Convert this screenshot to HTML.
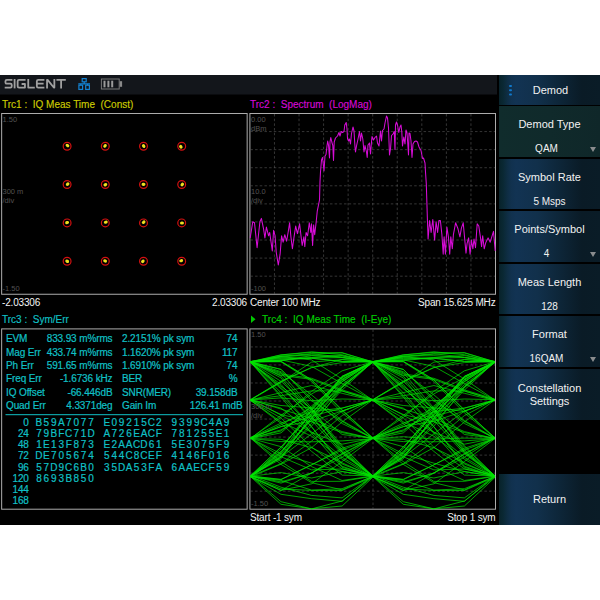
<!DOCTYPE html>
<html><head><meta charset="utf-8"><title>Demod</title>
<style>
html,body{margin:0;padding:0;background:#fff;}
body{width:600px;height:600px;position:relative;overflow:hidden;font-family:"Liberation Sans",sans-serif;}
#scr{position:absolute;left:0;top:75px;width:600px;height:450px;background:#000;}
#hdr{position:absolute;left:0;top:75px;width:497px;height:19px;background:#13161b;box-shadow:0 1px 0 rgba(19,22,27,0.5);}
.t{position:absolute;font-size:10px;line-height:12px;white-space:nowrap;}
.c{color:#10c0c6;-webkit-text-stroke:0.2px #10c0c6;letter-spacing:-0.12px;}
.h{width:7.45px;text-align:center;letter-spacing:0;}
.w{color:#f4f4f4;letter-spacing:-0.17px;}
.d{color:#525252;font-size:7.5px;line-height:9px;}
.pn{position:absolute;border:1px solid #b4b4b4;box-sizing:border-box;}
.mb{position:absolute;left:499px;width:101px;background:linear-gradient(90deg,#08222a 0%,#0a2833 4%,#0e2d42 8%,#11314e 12%,#123353 17%,#11304b 38%,#0d2537 62%,#0a1b26 82%,#0a1c27 100%);color:#f0f0f0;text-align:center;}
.mb.sel{background:linear-gradient(90deg,#102c2c 0%,#102a2b 50%,#0f2729 100%);}
.ml{position:absolute;left:0;width:101px;font-size:11px;line-height:13px;text-align:center;color:#f2f2f2;}
.mv{position:absolute;left:0;width:101px;font-size:10px;line-height:11px;text-align:center;color:#f2f2f2;}
.ar{position:absolute;right:4px;width:0;height:0;border-left:3.5px solid transparent;border-right:3.5px solid transparent;border-top:5.5px solid #8a8c8e;}
svg{position:absolute;left:0;top:0;}
</style></head><body>
<div id="scr"></div>
<div id="hdr"></div>

<!-- panels -->
<svg width="600" height="600" viewBox="0 0 600 600">
<g fill="none" stroke="#acacac" stroke-width="1">
<rect x="1.65" y="113.5" width="245.5" height="180.75"/>
<rect x="249.9" y="113.5" width="245.6" height="180.75"/>
<rect x="1.65" y="328.9" width="245.5" height="180.3"/>
<rect x="249.9" y="328.9" width="245.6" height="180.3"/>
</g>
<g stroke="#5c5c5c" stroke-width="0.58" stroke-dasharray="2.5 2.18">
<line x1="274.46" y1="114" x2="274.46" y2="294" />
<line x1="250.4" y1="131.57" x2="495" y2="131.57" />
<line x1="299.02" y1="114" x2="299.02" y2="294" />
<line x1="250.4" y1="149.65" x2="495" y2="149.65" />
<line x1="323.58" y1="114" x2="323.58" y2="294" />
<line x1="250.4" y1="167.72" x2="495" y2="167.72" />
<line x1="348.14" y1="114" x2="348.14" y2="294" />
<line x1="250.4" y1="185.80" x2="495" y2="185.80" />
<line x1="372.70" y1="114" x2="372.70" y2="294" />
<line x1="250.4" y1="203.88" x2="495" y2="203.88" />
<line x1="397.26" y1="114" x2="397.26" y2="294" />
<line x1="250.4" y1="221.95" x2="495" y2="221.95" />
<line x1="421.82" y1="114" x2="421.82" y2="294" />
<line x1="250.4" y1="240.03" x2="495" y2="240.03" />
<line x1="446.38" y1="114" x2="446.38" y2="294" />
<line x1="250.4" y1="258.10" x2="495" y2="258.10" />
<line x1="470.94" y1="114" x2="470.94" y2="294" />
<line x1="250.4" y1="276.18" x2="495" y2="276.18" />
<line x1="250.4" y1="346.93" x2="495" y2="346.93" />
<line x1="250.4" y1="364.96" x2="495" y2="364.96" />
<line x1="250.4" y1="382.99" x2="495" y2="382.99" />
<line x1="250.4" y1="401.02" x2="495" y2="401.02" />
<line x1="250.4" y1="419.05" x2="495" y2="419.05" />
<line x1="250.4" y1="437.08" x2="495" y2="437.08" />
<line x1="250.4" y1="455.11" x2="495" y2="455.11" />
<line x1="250.4" y1="473.14" x2="495" y2="473.14" />
<line x1="250.4" y1="491.17" x2="495" y2="491.17" />
<line x1="373" y1="329.4" x2="373" y2="508.7" />
</g>
<path d="M250.2 237.9 L252.8 221.7 L254.5 222.8 L257.1 247.7 L259.9 221.7 L261.4 218.4 L263.6 229.2 L264.9 237.9 L266.4 227.1 L268.6 235.8 L269.7 232.5 L272.3 250.9 L273.6 230.3 L275.1 235.8 L276.2 252.0 L278.3 265.0 L280.1 254.2 L281.6 235.8 L283.1 242.2 L284.8 234.7 L286.6 241.2 L288.1 232.5 L289.6 222.8 L290.9 236.8 L292.4 248.8 L293.9 237.9 L295.7 226.0 L297.4 233.6 L299.6 223.8 L301.1 236.8 L302.2 245.5 L303.9 236.8 L304.8 246.6 L306.1 232.5 L307.6 235.8 L309.3 222.8 L310.8 232.5 L311.5 223.8 L312.6 245.5 L313.6 224.9 L314.7 234.7 L316.2 221.7 L317.3 210.8 L319.5 200.0 L320.0 181.5 L320.5 172.0 L321.5 160.0 L322.5 157.5 L324.0 171.0 L325.0 156.0 L326.0 154.5 L327.0 146.0 L327.7 141.0 L328.5 145.0 L329.5 158.0 L330.0 142.0 L330.8 137.5 L331.8 142.0 L332.8 145.5 L333.5 160.5 L334.2 142.0 L335.5 138.0 L337.5 136.0 L339.0 132.5 L340.0 136.0 L341.2 131.5 L342.5 132.5 L344.0 131.5 L344.8 125.0 L346.2 122.5 L347.0 129.0 L347.5 138.5 L348.5 141.0 L349.5 139.0 L350.5 144.0 L351.5 133.5 L353.0 127.0 L354.0 131.0 L355.0 147.0 L355.5 152.0 L356.5 146.0 L358.0 139.0 L359.5 131.5 L360.5 141.0 L361.5 133.0 L362.8 139.0 L364.0 152.0 L365.0 145.5 L366.5 152.0 L367.2 157.5 L368.0 145.0 L369.5 143.0 L370.5 154.0 L371.5 142.0 L372.0 136.5 L373.5 140.0 L375.0 137.5 L376.5 136.0 L377.5 143.0 L379.0 146.0 L380.5 131.0 L381.5 141.0 L382.5 130.5 L384.0 129.0 L385.0 123.0 L386.5 116.0 L387.5 118.0 L388.5 128.0 L389.5 155.0 L390.5 149.0 L391.5 135.5 L393.0 134.0 L394.2 131.5 L395.0 149.5 L395.5 125.0 L396.5 122.0 L397.5 125.0 L398.8 132.5 L400.0 127.0 L401.0 125.0 L401.8 132.0 L402.5 146.0 L403.8 137.0 L405.0 144.0 L406.0 130.0 L407.0 133.0 L408.0 147.0 L408.5 155.0 L409.0 133.0 L410.0 133.5 L411.0 141.0 L412.0 157.5 L413.0 144.0 L414.5 141.5 L416.0 141.0 L417.5 142.0 L419.0 147.0 L421.0 150.5 L422.5 158.5 L423.5 158.0 L425.0 163.0 L425.5 172.0 L426.3 183.7 L426.8 200.0 L427.4 219.5 L428.1 239.0 L429.6 220.6 L431.1 232.5 L432.8 219.5 L434.6 240.1 L436.1 221.7 L437.6 232.5 L438.9 220.6 L440.4 220.6 L441.9 234.7 L443.2 254.2 L444.1 236.8 L445.4 254.2 L446.9 227.1 L448.4 236.8 L449.7 254.2 L450.8 236.8 L452.3 248.8 L453.4 234.7 L455.6 222.8 L457.8 228.2 L459.9 236.8 L461.4 228.2 L463.2 222.8 L464.7 239.0 L466.0 253.1 L467.1 243.3 L468.6 237.9 L470.1 254.2 L471.4 240.1 L472.9 248.8 L474.0 239.0 L475.5 247.7 L477.2 223.8 L478.8 226.0 L480.5 237.9 L481.6 246.6 L482.7 235.8 L484.2 248.8 L485.9 242.2 L488.1 237.9 L490.2 242.2 L493.5 231.4 L495.2 250.9" fill="none" stroke="#d60cd6" stroke-width="1.05" stroke-linejoin="round"/>
<g fill="none" stroke="#00e400" stroke-width="0.7" stroke-linejoin="round">
<path d="M250.4 362.2 L281.0 360.8 L311.6 355.6 L342.1 355.9 L372.7 362.7 L403.3 384.4 L433.9 420.4 L464.4 453.9 L495.0 475.9"/>
<path d="M250.4 362.7 L281.0 384.4 L311.6 420.4 L342.1 453.9 L372.7 475.9 L403.3 481.9 L433.9 473.2 L464.4 453.7 L495.0 437.6"/>
<path d="M250.4 475.9 L281.0 481.9 L311.6 473.2 L342.1 453.7 L372.7 437.6 L403.3 426.6 L433.9 421.2 L464.4 411.0 L495.0 400.1"/>
<path d="M250.4 437.6 L281.0 426.6 L311.6 421.2 L342.1 411.0 L372.7 400.1 L403.3 382.3 L433.9 362.1 L464.4 359.6 L495.0 361.5"/>
<path d="M250.4 400.1 L281.0 382.3 L311.6 362.1 L342.1 359.6 L372.7 361.5 L403.3 387.6 L433.9 417.1 L464.4 452.2 L495.0 476.8"/>
<path d="M250.4 361.5 L281.0 387.6 L311.6 417.1 L342.1 452.2 L372.7 476.8 L403.3 490.5 L433.9 473.0 L464.4 457.2 L495.0 437.7"/>
<path d="M250.4 476.8 L281.0 490.5 L311.6 473.0 L342.1 457.2 L372.7 437.7 L403.3 423.1 L433.9 411.6 L464.4 408.0 L495.0 400.0"/>
<path d="M250.4 437.7 L281.0 423.1 L311.6 411.6 L342.1 408.0 L372.7 400.0 L403.3 397.9 L433.9 400.7 L464.4 399.0 L495.0 399.7"/>
<path d="M250.4 400.0 L281.0 397.9 L311.6 400.7 L342.1 399.0 L372.7 399.7 L403.3 395.7 L433.9 390.9 L464.4 390.9 L495.0 400.2"/>
<path d="M250.4 399.7 L281.0 395.7 L311.6 390.9 L342.1 390.9 L372.7 400.2 L403.3 423.4 L433.9 451.4 L464.4 475.1 L495.0 476.0"/>
<path d="M250.4 400.2 L281.0 423.4 L311.6 451.4 L342.1 475.1 L372.7 476.0 L403.3 457.3 L433.9 423.2 L464.4 390.0 L495.0 361.7"/>
<path d="M250.4 476.0 L281.0 457.3 L311.6 423.2 L342.1 390.0 L372.7 361.7 L403.3 356.6 L433.9 359.9 L464.4 379.0 L495.0 400.1"/>
<path d="M250.4 361.7 L281.0 356.6 L311.6 359.9 L342.1 379.0 L372.7 400.1 L403.3 421.9 L433.9 436.2 L464.4 459.2 L495.0 476.8"/>
<path d="M250.4 400.1 L281.0 421.9 L311.6 436.2 L342.1 459.2 L372.7 476.8 L403.3 494.3 L433.9 498.7 L464.4 501.3 L495.0 475.7"/>
<path d="M250.4 476.8 L281.0 494.3 L311.6 498.7 L342.1 501.3 L372.7 475.7 L403.3 451.3 L433.9 418.9 L464.4 386.3 L495.0 362.1"/>
<path d="M250.4 475.7 L281.0 451.3 L311.6 418.9 L342.1 386.3 L372.7 362.1 L403.3 355.0 L433.9 351.8 L464.4 354.7 L495.0 362.2"/>
<path d="M250.4 362.1 L281.0 355.0 L311.6 351.8 L342.1 354.7 L372.7 362.2 L403.3 388.8 L433.9 411.9 L464.4 447.1 L495.0 475.8"/>
<path d="M250.4 362.2 L281.0 388.8 L311.6 411.9 L342.1 447.1 L372.7 475.8 L403.3 501.7 L433.9 508.9 L464.4 501.0 L495.0 476.8"/>
<path d="M250.4 475.8 L281.0 501.7 L311.6 508.9 L342.1 501.0 L372.7 476.8 L403.3 452.0 L433.9 420.5 L464.4 387.2 L495.0 362.4"/>
<path d="M250.4 476.8 L281.0 452.0 L311.6 420.5 L342.1 387.2 L372.7 362.4 L403.3 356.2 L433.9 353.7 L464.4 357.2 L495.0 361.5"/>
<path d="M250.4 362.4 L281.0 356.2 L311.6 353.7 L342.1 357.2 L372.7 361.5 L403.3 375.4 L433.9 379.4 L464.4 391.1 L495.0 399.9"/>
<path d="M250.4 361.5 L281.0 375.4 L311.6 379.4 L342.1 391.1 L372.7 399.9 L403.3 405.5 L433.9 407.9 L464.4 411.4 L495.0 399.6"/>
<path d="M250.4 399.9 L281.0 405.5 L311.6 407.9 L342.1 411.4 L372.7 399.6 L403.3 381.8 L433.9 367.7 L464.4 359.5 L495.0 361.9"/>
<path d="M250.4 399.6 L281.0 381.8 L311.6 367.7 L342.1 359.5 L372.7 361.9 L403.3 381.4 L433.9 409.2 L464.4 445.7 L495.0 476.5"/>
<path d="M250.4 361.9 L281.0 381.4 L311.6 409.2 L342.1 445.7 L372.7 476.5 L403.3 504.3 L433.9 508.8 L464.4 506.0 L495.0 477.4"/>
<path d="M250.4 476.5 L281.0 504.3 L311.6 508.8 L342.1 506.0 L372.7 477.4 L403.3 448.9 L433.9 409.4 L464.4 380.3 L495.0 361.7"/>
<path d="M250.4 477.4 L281.0 448.9 L311.6 409.4 L342.1 380.3 L372.7 361.7 L403.3 361.8 L433.9 381.4 L464.4 412.9 L495.0 438.0"/>
<path d="M250.4 361.7 L281.0 361.8 L311.6 381.4 L342.1 412.9 L372.7 438.0 L403.3 456.7 L433.9 469.9 L464.4 469.0 L495.0 475.4"/>
<path d="M250.4 438.0 L281.0 456.7 L311.6 469.9 L342.1 469.0 L372.7 475.4 L403.3 487.2 L433.9 495.4 L464.4 497.9 L495.0 475.9"/>
<path d="M250.4 475.4 L281.0 487.2 L311.6 495.4 L342.1 497.9 L372.7 475.9 L403.3 447.0 L433.9 413.8 L464.4 376.4 L495.0 361.7"/>
<path d="M250.4 475.9 L281.0 447.0 L311.6 413.8 L342.1 376.4 L372.7 361.7 L403.3 361.5 L433.9 380.0 L464.4 409.8 L495.0 438.0"/>
<path d="M250.4 361.7 L281.0 361.5 L311.6 380.0 L342.1 409.8 L372.7 438.0 L403.3 464.4 L433.9 482.7 L464.4 489.9 L495.0 476.1"/>
<path d="M250.4 438.0 L281.0 464.4 L311.6 482.7 L342.1 489.9 L372.7 476.1 L403.3 447.1 L433.9 413.7 L464.4 379.1 L495.0 362.0"/>
<path d="M250.4 476.1 L281.0 447.1 L311.6 413.7 L342.1 379.1 L372.7 362.0 L403.3 361.2 L433.9 379.7 L464.4 410.6 L495.0 437.8"/>
<path d="M250.4 362.0 L281.0 361.2 L311.6 379.7 L342.1 410.6 L372.7 437.8 L403.3 461.6 L433.9 481.4 L464.4 481.3 L495.0 476.3"/>
<path d="M250.4 437.8 L281.0 461.6 L311.6 481.4 L342.1 481.3 L372.7 476.3 L403.3 457.2 L433.9 433.8 L464.4 411.1 L495.0 400.1"/>
<path d="M250.4 476.3 L281.0 457.2 L311.6 433.8 L342.1 411.1 L372.7 400.1 L403.3 408.1 L433.9 431.9 L464.4 457.3 L495.0 475.8"/>
<path d="M250.4 400.1 L281.0 408.1 L311.6 431.9 L342.1 457.3 L372.7 475.8 L403.3 483.1 L433.9 472.9 L464.4 454.3 L495.0 438.1"/>
<path d="M250.4 475.8 L281.0 483.1 L311.6 472.9 L342.1 454.3 L372.7 438.1 L403.3 426.7 L433.9 416.1 L464.4 408.2 L495.0 400.0"/>
<path d="M250.4 438.1 L281.0 426.7 L311.6 416.1 L342.1 408.2 L372.7 400.0 L403.3 392.6 L433.9 385.5 L464.4 393.3 L495.0 400.5"/>
<path d="M250.4 400.0 L281.0 392.6 L311.6 385.5 L342.1 393.3 L372.7 400.5 L403.3 418.0 L433.9 447.1 L464.4 468.8 L495.0 476.1"/>
<path d="M250.4 400.5 L281.0 418.0 L311.6 447.1 L342.1 468.8 L372.7 476.1 L403.3 463.7 L433.9 441.1 L464.4 415.6 L495.0 399.5"/>
<path d="M250.4 476.1 L281.0 463.7 L311.6 441.1 L342.1 415.6 L372.7 399.5 L403.3 409.1 L433.9 418.5 L464.4 431.6 L495.0 438.5"/>
<path d="M250.4 399.5 L281.0 409.1 L311.6 418.5 L342.1 431.6 L372.7 438.5 L403.3 424.9 L433.9 407.4 L464.4 379.4 L495.0 362.1"/>
<path d="M250.4 438.5 L281.0 424.9 L311.6 407.4 L342.1 379.4 L372.7 362.1 L403.3 358.4 L433.9 358.3 L464.4 361.4 L495.0 362.0"/>
<path d="M250.4 362.1 L281.0 358.4 L311.6 358.3 L342.1 361.4 L372.7 362.0 L403.3 359.7 L433.9 357.6 L464.4 355.5 L495.0 361.7"/>
<path d="M250.4 362.0 L281.0 359.7 L311.6 357.6 L342.1 355.5 L372.7 361.7 L403.3 392.8 L433.9 426.8 L464.4 466.3 L495.0 476.5"/>
<path d="M250.4 361.7 L281.0 392.8 L311.6 426.8 L342.1 466.3 L372.7 476.5 L403.3 456.7 L433.9 417.7 L464.4 381.7 L495.0 361.6"/>
<path d="M250.4 476.5 L281.0 456.7 L311.6 417.7 L342.1 381.7 L372.7 361.6 L403.3 376.1 L433.9 410.1 L464.4 451.1 L495.0 476.0"/>
<path d="M250.4 361.6 L281.0 376.1 L311.6 410.1 L342.1 451.1 L372.7 476.0 L403.3 479.3 L433.9 464.8 L464.4 450.0 L495.0 438.5"/>
<path d="M250.4 476.0 L281.0 479.3 L311.6 464.8 L342.1 450.0 L372.7 438.5 L403.3 439.3 L433.9 447.7 L464.4 462.8 L495.0 476.6"/>
<path d="M250.4 438.5 L281.0 439.3 L311.6 447.7 L342.1 462.8 L372.7 476.6 L403.3 488.9 L433.9 490.4 L464.4 490.5 L495.0 477.1"/>
<path d="M250.4 476.6 L281.0 488.9 L311.6 490.4 L342.1 490.5 L372.7 477.1 L403.3 464.2 L433.9 447.6 L464.4 422.0 L495.0 399.9"/>
<path d="M250.4 477.1 L281.0 464.2 L311.6 447.6 L342.1 422.0 L372.7 399.9 L403.3 381.1 L433.9 367.4 L464.4 362.6 L495.0 361.5"/>
<path d="M250.4 399.9 L281.0 381.1 L311.6 367.4 L342.1 362.6 L372.7 361.5 L403.3 371.7 L433.9 394.9 L464.4 420.6 L495.0 438.1"/>
<path d="M250.4 361.5 L281.0 371.7 L311.6 394.9 L342.1 420.6 L372.7 438.1 L403.3 453.9 L433.9 463.2 L464.4 471.5 L495.0 476.2"/>
<path d="M250.4 438.1 L281.0 453.9 L311.6 463.2 L342.1 471.5 L372.7 476.2 L403.3 472.6 L433.9 478.0 L464.4 471.6 L495.0 476.7"/>
<path d="M250.4 476.2 L281.0 472.6 L311.6 478.0 L342.1 471.6 L372.7 476.7 L403.3 480.4 L433.9 490.1 L464.4 488.7 L495.0 476.4"/>
<path d="M250.4 476.7 L281.0 480.4 L311.6 490.1 L342.1 488.7 L372.7 476.4 L403.3 455.6 L433.9 426.1 L464.4 387.6 L495.0 361.7"/>
<path d="M250.4 476.4 L281.0 455.6 L311.6 426.1 L342.1 387.6 L372.7 361.7 L403.3 356.0 L433.9 355.7 L464.4 357.5 L495.0 361.6"/>
<path d="M250.4 361.7 L281.0 356.0 L311.6 355.7 L342.1 357.5 L372.7 361.6 L403.3 374.0 L433.9 378.3 L464.4 389.9 L495.0 399.2"/>
<path d="M250.4 361.6 L281.0 374.0 L311.6 378.3 L342.1 389.9 L372.7 399.2 L403.3 415.1 L433.9 432.4 L464.4 444.2 L495.0 438.2"/>
<path d="M250.4 399.2 L281.0 415.1 L311.6 432.4 L342.1 444.2 L372.7 438.2 L403.3 417.4 L433.9 391.3 L464.4 370.8 L495.0 361.7"/>
<path d="M250.4 438.2 L281.0 417.4 L311.6 391.3 L342.1 370.8 L372.7 361.7 L403.3 377.9 L433.9 416.0 L464.4 452.3 L495.0 476.4"/>
<path d="M250.4 361.7 L281.0 377.9 L311.6 416.0 L342.1 452.3 L372.7 476.4 L403.3 490.4 L433.9 483.8 L464.4 461.5 L495.0 438.6"/>
<path d="M250.4 476.4 L281.0 490.4 L311.6 483.8 L342.1 461.5 L372.7 438.6 L403.3 415.3 L433.9 393.9 L464.4 377.6 L495.0 361.9"/>
<path d="M250.4 438.6 L281.0 415.3 L311.6 393.9 L342.1 377.6 L372.7 361.9 L403.3 357.1 L433.9 354.1 L464.4 352.6 L495.0 362.0"/>
<path d="M250.4 361.9 L281.0 357.1 L311.6 354.1 L342.1 352.6 L372.7 362.0 L403.3 397.1 L433.9 433.4 L464.4 467.3 L495.0 476.6"/>
<path d="M250.4 362.0 L281.0 397.1 L311.6 433.4 L342.1 467.3 L372.7 476.6 L403.3 454.2 L433.9 418.3 L464.4 376.4 L495.0 362.6"/>
<path d="M250.4 476.6 L281.0 454.2 L311.6 418.3 L342.1 376.4 L372.7 362.6 L403.3 372.7 L433.9 408.1 L464.4 449.6 L495.0 476.0"/>
<path d="M250.4 362.6 L281.0 372.7 L311.6 408.1 L342.1 449.6 L372.7 476.0 L403.3 479.7 L433.9 464.9 L464.4 448.3 L495.0 438.3"/>
<path d="M250.4 476.0 L281.0 479.7 L311.6 464.9 L342.1 448.3 L372.7 438.3 L403.3 446.7 L433.9 466.6 L464.4 480.5 L495.0 476.0"/>
<path d="M250.4 438.3 L281.0 446.7 L311.6 466.6 L342.1 480.5 L372.7 476.0 L403.3 453.0 L433.9 410.6 L464.4 376.4 L495.0 361.8"/>
<path d="M250.4 476.0 L281.0 453.0 L311.6 410.6 L342.1 376.4 L372.7 361.8 L403.3 369.3 L433.9 400.7 L464.4 421.4 L495.0 438.7"/>
<path d="M250.4 361.8 L281.0 369.3 L311.6 400.7 L342.1 421.4 L372.7 438.7 L403.3 432.9 L433.9 405.9 L464.4 381.7 L495.0 361.6"/>
<path d="M250.4 438.7 L281.0 432.9 L311.6 405.9 L342.1 381.7 L372.7 361.6 L403.3 357.8 L433.9 358.2 L464.4 361.5 L495.0 361.4"/>
<path d="M250.4 361.6 L281.0 357.8 L311.6 358.2 L342.1 361.5 L372.7 361.4 L403.3 360.5 L433.9 357.8 L464.4 357.7 L495.0 362.8"/>
<path d="M250.4 361.4 L281.0 360.5 L311.6 357.8 L342.1 357.7 L372.7 362.8 L403.3 386.2 L433.9 409.1 L464.4 434.5 L495.0 438.3"/>
<path d="M250.4 362.8 L281.0 386.2 L311.6 409.1 L342.1 434.5 L372.7 438.3 L403.3 429.9 L433.9 412.2 L464.4 386.9 L495.0 361.7"/>
<path d="M250.4 438.3 L281.0 429.9 L311.6 412.2 L342.1 386.9 L372.7 361.7 L403.3 354.8 L433.9 352.4 L464.4 353.0 L495.0 361.7"/>
<path d="M250.4 361.7 L281.0 354.8 L311.6 352.4 L342.1 353.0 L372.7 361.7 L403.3 395.6 L433.9 426.8 L464.4 464.0 L495.0 476.0"/>
<path d="M250.4 361.7 L281.0 395.6 L311.6 426.8 L342.1 464.0 L372.7 476.0 L403.3 458.8 L433.9 415.1 L464.4 384.6 L495.0 362.0"/>
<path d="M250.4 476.0 L281.0 458.8 L311.6 415.1 L342.1 384.6 L372.7 362.0 L403.3 369.5 L433.9 398.7 L464.4 423.5 L495.0 438.1"/>
<path d="M250.4 362.0 L281.0 369.5 L311.6 398.7 L342.1 423.5 L372.7 438.1 L403.3 431.0 L433.9 408.6 L464.4 377.5 L495.0 361.7"/>
<path d="M250.4 438.1 L281.0 431.0 L311.6 408.6 L342.1 377.5 L372.7 361.7 L403.3 359.9 L433.9 366.4 L464.4 383.5 L495.0 400.0"/>
<path d="M250.4 361.7 L281.0 359.9 L311.6 366.4 L342.1 383.5 L372.7 400.0 L403.3 414.5 L433.9 421.8 L464.4 432.6 L495.0 438.5"/>
<path d="M250.4 400.0 L281.0 414.5 L311.6 421.8 L342.1 432.6 L372.7 438.5 L403.3 441.6 L433.9 441.8 L464.4 440.9 L495.0 438.7"/>
<path d="M250.4 438.5 L281.0 441.6 L311.6 441.8 L342.1 440.9 L372.7 438.7 L403.3 436.7 L433.9 439.1 L464.4 438.1 L495.0 438.5"/>
</g>
<circle cx="67.1" cy="146.2" r="3.9" fill="none" stroke="#d41010" stroke-width="1.2"/>
<ellipse cx="67.0" cy="145.4" rx="2" ry="1.6" fill="#f0e020" transform="rotate(35 67.1 146.2)"/>
<circle cx="105.3" cy="146.2" r="3.9" fill="none" stroke="#d41010" stroke-width="1.2"/>
<ellipse cx="105.4" cy="145.8" rx="2" ry="1.6" fill="#f0e020" transform="rotate(-53 105.3 146.2)"/>
<circle cx="143.5" cy="146.2" r="3.9" fill="none" stroke="#d41010" stroke-width="1.2"/>
<ellipse cx="143.5" cy="146.0" rx="2" ry="1.6" fill="#f0e020" transform="rotate(52 143.5 146.2)"/>
<circle cx="181.7" cy="146.2" r="3.9" fill="none" stroke="#d41010" stroke-width="1.2"/>
<ellipse cx="181.6" cy="147.2" rx="2" ry="1.6" fill="#f0e020" transform="rotate(52 181.7 146.2)"/>
<circle cx="67.1" cy="184.5" r="3.9" fill="none" stroke="#d41010" stroke-width="1.2"/>
<ellipse cx="67.8" cy="184.6" rx="2" ry="1.6" fill="#f0e020" transform="rotate(-45 67.1 184.5)"/>
<circle cx="105.3" cy="184.5" r="3.9" fill="none" stroke="#d41010" stroke-width="1.2"/>
<ellipse cx="105.3" cy="184.7" rx="2" ry="1.6" fill="#f0e020" transform="rotate(-25 105.3 184.5)"/>
<circle cx="143.5" cy="184.5" r="3.9" fill="none" stroke="#d41010" stroke-width="1.2"/>
<ellipse cx="143.5" cy="184.4" rx="2" ry="1.6" fill="#f0e020" transform="rotate(6 143.5 184.5)"/>
<circle cx="181.7" cy="184.5" r="3.9" fill="none" stroke="#d41010" stroke-width="1.2"/>
<ellipse cx="182.1" cy="184.9" rx="2" ry="1.6" fill="#f0e020" transform="rotate(-49 181.7 184.5)"/>
<circle cx="67.1" cy="222.9" r="3.9" fill="none" stroke="#d41010" stroke-width="1.2"/>
<ellipse cx="67.2" cy="222.6" rx="2" ry="1.6" fill="#f0e020" transform="rotate(-17 67.1 222.9)"/>
<circle cx="105.3" cy="222.9" r="3.9" fill="none" stroke="#d41010" stroke-width="1.2"/>
<ellipse cx="105.9" cy="222.3" rx="2" ry="1.6" fill="#f0e020" transform="rotate(-11 105.3 222.9)"/>
<circle cx="143.5" cy="222.9" r="3.9" fill="none" stroke="#d41010" stroke-width="1.2"/>
<ellipse cx="144.0" cy="222.4" rx="2" ry="1.6" fill="#f0e020" transform="rotate(-34 143.5 222.9)"/>
<circle cx="181.7" cy="222.9" r="3.9" fill="none" stroke="#d41010" stroke-width="1.2"/>
<ellipse cx="182.0" cy="223.0" rx="2" ry="1.6" fill="#f0e020" transform="rotate(3 181.7 222.9)"/>
<circle cx="67.1" cy="261.2" r="3.9" fill="none" stroke="#d41010" stroke-width="1.2"/>
<ellipse cx="67.2" cy="261.2" rx="2" ry="1.6" fill="#f0e020" transform="rotate(28 67.1 261.2)"/>
<circle cx="105.3" cy="261.2" r="3.9" fill="none" stroke="#d41010" stroke-width="1.2"/>
<ellipse cx="105.0" cy="261.1" rx="2" ry="1.6" fill="#f0e020" transform="rotate(29 105.3 261.2)"/>
<circle cx="143.5" cy="261.2" r="3.9" fill="none" stroke="#d41010" stroke-width="1.2"/>
<ellipse cx="143.0" cy="260.8" rx="2" ry="1.6" fill="#f0e020" transform="rotate(-50 143.5 261.2)"/>
<circle cx="181.7" cy="261.2" r="3.9" fill="none" stroke="#d41010" stroke-width="1.2"/>
<ellipse cx="181.3" cy="260.6" rx="2" ry="1.6" fill="#f0e020" transform="rotate(-12 181.7 261.2)"/>
<!-- logo -->
<g fill="none" stroke="#a0a0a0" stroke-width="1.8" stroke-linejoin="round">
<path d="M12.4 79.85 H6.8 Q5.45 79.85 5.45 81.2 V82.4 Q5.45 83.7 6.8 83.7 H10.4 Q11.75 83.7 11.75 85 V86.2 Q11.75 87.55 10.4 87.55 H4.7"/>
<path d="M14.6 79 V88.4"/>
<path d="M25.6 79.85 H19 Q17.65 79.85 17.65 81.2 V86.2 Q17.65 87.55 19 87.55 H24.95 V84 H21.6"/>
<path d="M28.25 79 V87.55 H34.8"/>
<path d="M44.4 79.85 H38.2 Q36.85 79.85 36.85 81.2 V86.2 Q36.85 87.55 38.2 87.55 H44.4 M36.85 83.7 H43.6"/>
<path d="M47.05 88.4 V79.85 H47.6 L53.8 87.55 H54.35 V79"/>
<path d="M56.4 79.85 H65.8 M61.1 79.85 V88.4"/>
</g>
<!-- network icon -->
<g fill="none" stroke="#1482d2" stroke-width="1.2">
<rect x="82.2" y="78.6" width="4" height="3.2"/>
<rect x="78.9" y="85.2" width="3.7" height="4.2"/>
<rect x="85.7" y="85.2" width="3.7" height="4.2"/>
<path d="M84.2 81.8 V83.8 M78.3 83.9 H90 M80.75 83.9 V85.2 M87.55 83.9 V85.2"/>
</g>
<!-- battery -->
<g>
<rect x="101.4" y="79" width="17.8" height="10" fill="none" stroke="#787878" stroke-width="1"/>
<rect x="119.7" y="81.2" width="2.4" height="5.6" fill="#8a8a8a"/>
<rect x="103.5" y="80.7" width="2" height="6.6" fill="#9a9a9a"/>
<rect x="107.4" y="80.7" width="2" height="6.6" fill="#9a9a9a"/>
<rect x="111.2" y="80.7" width="2" height="6.6" fill="#9a9a9a"/>
</g>
<!-- trc4 marker -->
<path d="M251 315.5 L251 323 L255.5 319.2 Z" fill="#00c800"/>
<!-- separator -->
<line x1="5.5" y1="414.7" x2="243" y2="414.7" stroke="#10c0c6" stroke-width="1"/>
</svg>

<!-- trace titles -->
<div class="t" style="left:2px;top:99px;color:#cccc00;-webkit-text-stroke:0.15px #cccc00;white-space:pre">Trc1 :  IQ Meas Time  (Const)</div>
<div class="t" style="left:250px;top:99px;color:#d408d4;-webkit-text-stroke:0.15px #d408d4;white-space:pre">Trc2 :  Spectrum  (LogMag)</div>
<div class="t" style="left:2px;top:314px;color:#10c0c6;-webkit-text-stroke:0.15px #10c0c6;white-space:pre">Trc3 :  Sym/Err</div>
<div class="t" style="left:262px;top:314px;color:#00cc00;-webkit-text-stroke:0.15px #00cc00;letter-spacing:0.03px;white-space:pre">Trc4 :  IQ Meas Time  (I-Eye)</div>

<!-- axis labels -->
<div class="t w" style="left:2px;top:297px;">-2.03306</div>
<div class="t w" style="right:353px;top:297px;">2.03306</div>
<div class="t w" style="left:250px;top:297px;">Center 100 MHz</div>
<div class="t w" style="right:104.5px;top:297px;">Span 15.625 MHz</div>
<div class="t w" style="left:250px;top:512px;">Start -1 sym</div>
<div class="t w" style="right:104.5px;top:512px;">Stop 1 sym</div>

<!-- dim scale labels -->
<div class="t d" style="left:2.5px;top:115px;">1.50</div>
<div class="t d" style="left:2.5px;top:187px;">300 m</div>
<div class="t d" style="left:2.5px;top:196px;">/div</div>
<div class="t d" style="left:2.5px;top:284px;">-1.50</div>
<div class="t d" style="left:251px;top:115px;">0.00</div>
<div class="t d" style="left:251px;top:124px;">dBm</div>
<div class="t d" style="left:251px;top:187px;">10.0</div>
<div class="t d" style="left:251px;top:196px;">/div</div>
<div class="t d" style="left:251px;top:284px;">-100</div>
<div class="t d" style="left:251px;top:330px;">1.50</div>
<div class="t d" style="left:251px;top:402px;">300 m</div>
<div class="t d" style="left:251px;top:411px;">/div</div>
<div class="t d" style="left:251px;top:499px;">-1.50</div>

<!-- table -->
<div class="t c" style="left:6px;top:333.0px">EVM</div>
<div class="t c" style="right:487.5px;top:333.0px">833.93 m%rms</div>
<div class="t c" style="left:122px;top:333.0px">2.2151% pk sym</div>
<div class="t c" style="right:362.5px;top:333.0px">74</div>
<div class="t c" style="left:6px;top:347.0px">Mag Err</div>
<div class="t c" style="right:487.5px;top:347.0px">433.74 m%rms</div>
<div class="t c" style="left:122px;top:347.0px">1.1620% pk sym</div>
<div class="t c" style="right:362.5px;top:347.0px">117</div>
<div class="t c" style="left:6px;top:360.0px">Ph Err</div>
<div class="t c" style="right:487.5px;top:360.0px">591.65 m%rms</div>
<div class="t c" style="left:122px;top:360.0px">1.6910% pk sym</div>
<div class="t c" style="right:362.5px;top:360.0px">74</div>
<div class="t c" style="left:6px;top:373.0px">Freq Err</div>
<div class="t c" style="right:487.5px;top:373.0px">-1.6736 kHz</div>
<div class="t c" style="left:122px;top:373.0px">BER</div>
<div class="t c" style="right:362.5px;top:373.0px">%</div>
<div class="t c" style="left:6px;top:387.0px">IQ Offset</div>
<div class="t c" style="right:487.5px;top:387.0px">-66.446dB</div>
<div class="t c" style="left:122px;top:387.0px">SNR(MER)</div>
<div class="t c" style="right:362.5px;top:387.0px">39.158dB</div>
<div class="t c" style="left:6px;top:400.0px">Quad Err</div>
<div class="t c" style="right:487.5px;top:400.0px">4.3371deg</div>
<div class="t c" style="left:122px;top:400.0px">Gain Im</div>
<div class="t c" style="right:357.5px;top:400.0px">126.41 mdB</div>
<div class="t c" style="right:571.2px;top:417.0px">0</div>
<div class="t c h" style="left:35.20px;top:417.0px">B</div>
<div class="t c h" style="left:42.65px;top:417.0px">5</div>
<div class="t c h" style="left:50.10px;top:417.0px">9</div>
<div class="t c h" style="left:57.55px;top:417.0px">A</div>
<div class="t c h" style="left:65.00px;top:417.0px">7</div>
<div class="t c h" style="left:72.45px;top:417.0px">0</div>
<div class="t c h" style="left:79.90px;top:417.0px">7</div>
<div class="t c h" style="left:87.35px;top:417.0px">7</div>
<div class="t c h" style="left:103.00px;top:417.0px">E</div>
<div class="t c h" style="left:110.45px;top:417.0px">0</div>
<div class="t c h" style="left:117.90px;top:417.0px">9</div>
<div class="t c h" style="left:125.35px;top:417.0px">2</div>
<div class="t c h" style="left:132.80px;top:417.0px">1</div>
<div class="t c h" style="left:140.25px;top:417.0px">5</div>
<div class="t c h" style="left:147.70px;top:417.0px">C</div>
<div class="t c h" style="left:155.15px;top:417.0px">2</div>
<div class="t c h" style="left:170.60px;top:417.0px">9</div>
<div class="t c h" style="left:178.05px;top:417.0px">3</div>
<div class="t c h" style="left:185.50px;top:417.0px">9</div>
<div class="t c h" style="left:192.95px;top:417.0px">9</div>
<div class="t c h" style="left:200.40px;top:417.0px">C</div>
<div class="t c h" style="left:207.85px;top:417.0px">4</div>
<div class="t c h" style="left:215.30px;top:417.0px">A</div>
<div class="t c h" style="left:222.75px;top:417.0px">9</div>
<div class="t c" style="right:571.2px;top:428.0px">24</div>
<div class="t c h" style="left:35.20px;top:428.0px">7</div>
<div class="t c h" style="left:42.65px;top:428.0px">9</div>
<div class="t c h" style="left:50.10px;top:428.0px">B</div>
<div class="t c h" style="left:57.55px;top:428.0px">F</div>
<div class="t c h" style="left:65.00px;top:428.0px">C</div>
<div class="t c h" style="left:72.45px;top:428.0px">7</div>
<div class="t c h" style="left:79.90px;top:428.0px">1</div>
<div class="t c h" style="left:87.35px;top:428.0px">D</div>
<div class="t c h" style="left:103.00px;top:428.0px">A</div>
<div class="t c h" style="left:110.45px;top:428.0px">7</div>
<div class="t c h" style="left:117.90px;top:428.0px">2</div>
<div class="t c h" style="left:125.35px;top:428.0px">6</div>
<div class="t c h" style="left:132.80px;top:428.0px">E</div>
<div class="t c h" style="left:140.25px;top:428.0px">A</div>
<div class="t c h" style="left:147.70px;top:428.0px">C</div>
<div class="t c h" style="left:155.15px;top:428.0px">F</div>
<div class="t c h" style="left:170.60px;top:428.0px">7</div>
<div class="t c h" style="left:178.05px;top:428.0px">8</div>
<div class="t c h" style="left:185.50px;top:428.0px">1</div>
<div class="t c h" style="left:192.95px;top:428.0px">2</div>
<div class="t c h" style="left:200.40px;top:428.0px">5</div>
<div class="t c h" style="left:207.85px;top:428.0px">5</div>
<div class="t c h" style="left:215.30px;top:428.0px">E</div>
<div class="t c h" style="left:222.75px;top:428.0px">1</div>
<div class="t c" style="right:571.2px;top:439.0px">48</div>
<div class="t c h" style="left:35.20px;top:439.0px">1</div>
<div class="t c h" style="left:42.65px;top:439.0px">E</div>
<div class="t c h" style="left:50.10px;top:439.0px">1</div>
<div class="t c h" style="left:57.55px;top:439.0px">3</div>
<div class="t c h" style="left:65.00px;top:439.0px">F</div>
<div class="t c h" style="left:72.45px;top:439.0px">8</div>
<div class="t c h" style="left:79.90px;top:439.0px">7</div>
<div class="t c h" style="left:87.35px;top:439.0px">3</div>
<div class="t c h" style="left:103.00px;top:439.0px">E</div>
<div class="t c h" style="left:110.45px;top:439.0px">2</div>
<div class="t c h" style="left:117.90px;top:439.0px">A</div>
<div class="t c h" style="left:125.35px;top:439.0px">A</div>
<div class="t c h" style="left:132.80px;top:439.0px">C</div>
<div class="t c h" style="left:140.25px;top:439.0px">D</div>
<div class="t c h" style="left:147.70px;top:439.0px">6</div>
<div class="t c h" style="left:155.15px;top:439.0px">1</div>
<div class="t c h" style="left:170.60px;top:439.0px">5</div>
<div class="t c h" style="left:178.05px;top:439.0px">E</div>
<div class="t c h" style="left:185.50px;top:439.0px">3</div>
<div class="t c h" style="left:192.95px;top:439.0px">0</div>
<div class="t c h" style="left:200.40px;top:439.0px">7</div>
<div class="t c h" style="left:207.85px;top:439.0px">5</div>
<div class="t c h" style="left:215.30px;top:439.0px">F</div>
<div class="t c h" style="left:222.75px;top:439.0px">9</div>
<div class="t c" style="right:571.2px;top:450.0px">72</div>
<div class="t c h" style="left:35.20px;top:450.0px">D</div>
<div class="t c h" style="left:42.65px;top:450.0px">E</div>
<div class="t c h" style="left:50.10px;top:450.0px">7</div>
<div class="t c h" style="left:57.55px;top:450.0px">0</div>
<div class="t c h" style="left:65.00px;top:450.0px">5</div>
<div class="t c h" style="left:72.45px;top:450.0px">6</div>
<div class="t c h" style="left:79.90px;top:450.0px">7</div>
<div class="t c h" style="left:87.35px;top:450.0px">4</div>
<div class="t c h" style="left:103.00px;top:450.0px">5</div>
<div class="t c h" style="left:110.45px;top:450.0px">4</div>
<div class="t c h" style="left:117.90px;top:450.0px">4</div>
<div class="t c h" style="left:125.35px;top:450.0px">C</div>
<div class="t c h" style="left:132.80px;top:450.0px">8</div>
<div class="t c h" style="left:140.25px;top:450.0px">C</div>
<div class="t c h" style="left:147.70px;top:450.0px">E</div>
<div class="t c h" style="left:155.15px;top:450.0px">F</div>
<div class="t c h" style="left:170.60px;top:450.0px">4</div>
<div class="t c h" style="left:178.05px;top:450.0px">1</div>
<div class="t c h" style="left:185.50px;top:450.0px">4</div>
<div class="t c h" style="left:192.95px;top:450.0px">6</div>
<div class="t c h" style="left:200.40px;top:450.0px">F</div>
<div class="t c h" style="left:207.85px;top:450.0px">0</div>
<div class="t c h" style="left:215.30px;top:450.0px">1</div>
<div class="t c h" style="left:222.75px;top:450.0px">6</div>
<div class="t c" style="right:571.2px;top:462.0px">96</div>
<div class="t c h" style="left:35.20px;top:462.0px">5</div>
<div class="t c h" style="left:42.65px;top:462.0px">7</div>
<div class="t c h" style="left:50.10px;top:462.0px">D</div>
<div class="t c h" style="left:57.55px;top:462.0px">9</div>
<div class="t c h" style="left:65.00px;top:462.0px">C</div>
<div class="t c h" style="left:72.45px;top:462.0px">6</div>
<div class="t c h" style="left:79.90px;top:462.0px">B</div>
<div class="t c h" style="left:87.35px;top:462.0px">0</div>
<div class="t c h" style="left:103.00px;top:462.0px">3</div>
<div class="t c h" style="left:110.45px;top:462.0px">5</div>
<div class="t c h" style="left:117.90px;top:462.0px">D</div>
<div class="t c h" style="left:125.35px;top:462.0px">A</div>
<div class="t c h" style="left:132.80px;top:462.0px">5</div>
<div class="t c h" style="left:140.25px;top:462.0px">3</div>
<div class="t c h" style="left:147.70px;top:462.0px">F</div>
<div class="t c h" style="left:155.15px;top:462.0px">A</div>
<div class="t c h" style="left:170.60px;top:462.0px">6</div>
<div class="t c h" style="left:178.05px;top:462.0px">A</div>
<div class="t c h" style="left:185.50px;top:462.0px">A</div>
<div class="t c h" style="left:192.95px;top:462.0px">E</div>
<div class="t c h" style="left:200.40px;top:462.0px">C</div>
<div class="t c h" style="left:207.85px;top:462.0px">F</div>
<div class="t c h" style="left:215.30px;top:462.0px">5</div>
<div class="t c h" style="left:222.75px;top:462.0px">9</div>
<div class="t c" style="right:571.2px;top:473.0px">120</div>
<div class="t c h" style="left:35.20px;top:473.0px">8</div>
<div class="t c h" style="left:42.65px;top:473.0px">6</div>
<div class="t c h" style="left:50.10px;top:473.0px">9</div>
<div class="t c h" style="left:57.55px;top:473.0px">3</div>
<div class="t c h" style="left:65.00px;top:473.0px">B</div>
<div class="t c h" style="left:72.45px;top:473.0px">8</div>
<div class="t c h" style="left:79.90px;top:473.0px">5</div>
<div class="t c h" style="left:87.35px;top:473.0px">0</div>
<div class="t c" style="right:571.2px;top:484.0px">144</div>
<div class="t c" style="right:571.2px;top:495.0px">168</div>

<!-- menu -->
<div class="mb" style="top:75px;height:30px;"><div class="ml" style="top:9px;left:1px;">Demod</div>
<div style="position:absolute;left:10.1px;top:9.7px;width:2.8px;height:2.1px;border-radius:1px;background:#1078cc;box-shadow:0 4.25px 0 #1078cc,0 8.5px 0 #1078cc;"></div></div>
<div class="mb sel" style="top:106px;height:51px;"><div class="ml" style="top:12px;">Demod Type</div><div class="mv" style="top:37px;left:-3px;">QAM</div><div class="ar" style="top:40.5px;"></div></div>
<div class="mb" style="top:158.6px;height:50.9px;"><div class="ml" style="top:12px;">Symbol Rate</div><div class="mv" style="top:37px;">5 Msps</div></div>
<div class="mb" style="top:211.1px;height:50.9px;"><div class="ml" style="top:12px;">Points/Symbol</div><div class="mv" style="top:37px;left:-3px;">4</div><div class="ar" style="top:40.5px;"></div></div>
<div class="mb" style="top:263.6px;height:50.9px;"><div class="ml" style="top:12px;">Meas Length</div><div class="mv" style="top:37px;">128</div></div>
<div class="mb" style="top:316.1px;height:50.9px;"><div class="ml" style="top:12px;">Format</div><div class="mv" style="top:37px;left:-3px;">16QAM</div><div class="ar" style="top:40.5px;"></div></div>
<div class="mb" style="top:368.6px;height:51.2px;"><div class="ml" style="top:13px;">Constellation<br>Settings</div></div>
<div class="mb" style="top:473.8px;height:51.2px;"><div class="ml" style="top:19px;">Return</div></div>
</body></html>
